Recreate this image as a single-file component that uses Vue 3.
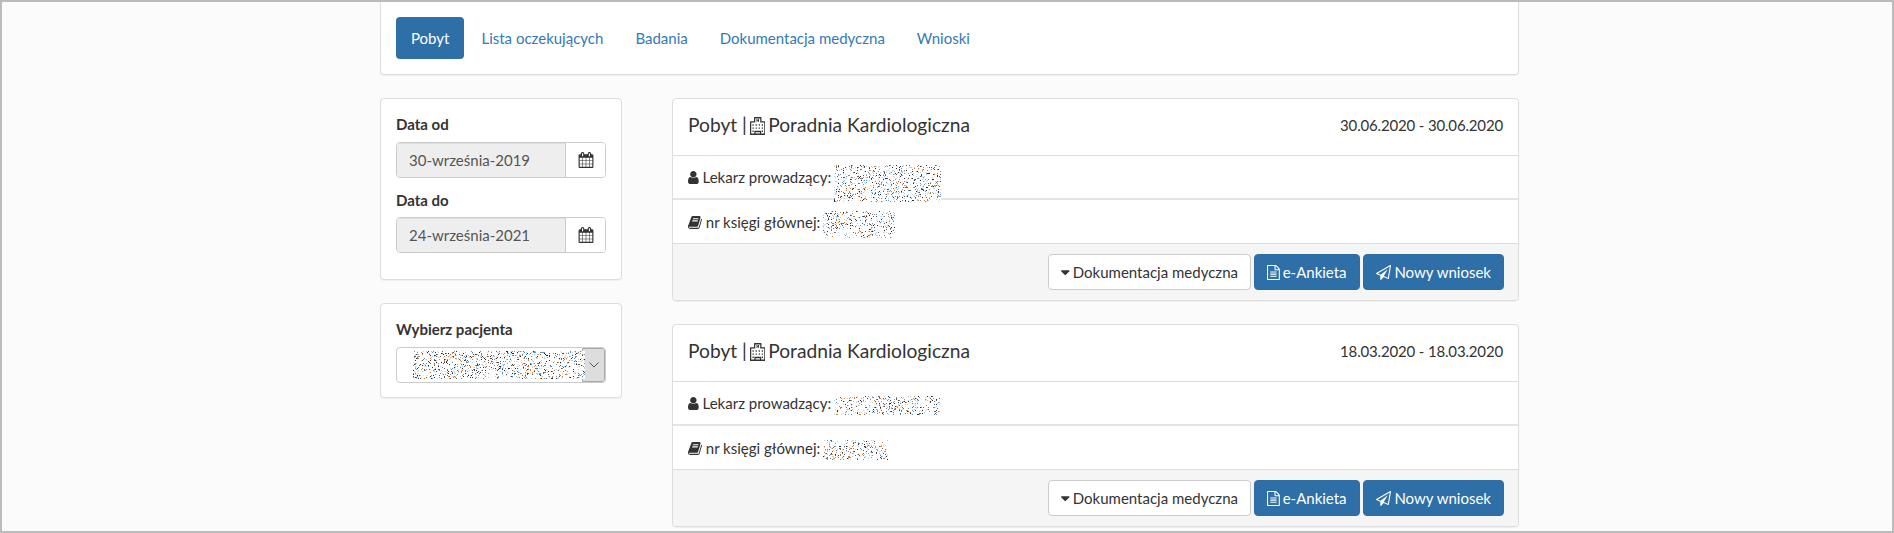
<template>
  <div class="frame">
    <div class="page">
      <nav class="panel nav-panel">
        <a
          v-for="(tab, idx) in tabs"
          :key="tab"
          class="pill"
          :class="{ active: idx === 0 }"
          href="#"
        >{{ tab }}</a>
      </nav>

      <div class="columns">
        <aside class="side">
          <div class="panel side-panel">
            <template v-for="range in ranges" :key="range.label">
              <label class="field-label">{{ range.label }}</label>
              <div class="input-group">
                <span class="input">{{ range.value }}</span>
                <span class="addon">
                  <svg class="icon calendar" viewBox="0 0 1792 1792"><path :d="icons.calendar" /></svg>
                </span>
              </div>
            </template>
          </div>

          <div class="panel patient-panel">
            <label class="field-label">Wybierz pacjenta</label>
            <div class="select">
              <svg
                class="noise select-noise"
                :width="172"
                :height="28"
                shape-rendering="crispEdges"
              >
                <path v-for="d in noise(172, 28, 7)" :key="d.color" :d="d.path" :fill="d.color" />
              </svg>
              <span class="select-arrow">
                <svg width="10" height="6" viewBox="0 0 10 6">
                  <path d="M0.5 0.5 L5 5 L9.5 0.5" fill="none" stroke="#555" stroke-width="1" />
                </svg>
              </span>
            </div>
          </div>
        </aside>

        <main class="visits">
          <section v-for="visit in visits" :key="visit.dates" class="panel visit">
            <header class="visit-head">
              <h3 class="visit-title">
                Pobyt |
                <svg class="icon hospital" viewBox="96 64 1600 1664" preserveAspectRatio="none">
                  <path :d="icons.hospital" fill-rule="evenodd" />
                </svg>
                Poradnia Kardiologiczna
              </h3>
              <span class="dates">{{ visit.dates }}</span>
            </header>
            <div class="visit-row">
              <svg class="icon" viewBox="256 0 1280 1792"><path :d="icons.user" /></svg>
              Lekarz prowadzący:
              <svg
                class="noise"
                :width="visit.doctor.w"
                :height="visit.doctor.h"
                :style="{ top: visit.doctor.dy + 'px' }"
                shape-rendering="crispEdges"
              >
                <path
                  v-for="d in noise(visit.doctor.w, visit.doctor.h, visit.doctor.seed)"
                  :key="d.color"
                  :d="d.path"
                  :fill="d.color"
                />
              </svg>
            </div>
            <div class="visit-row second">
              <svg class="icon" viewBox="0 0 1664 1792"><path :d="icons.book" /></svg>
              nr księgi głównej:
              <svg
                class="noise"
                :width="visit.book.w"
                :height="visit.book.h"
                :style="{ top: visit.book.dy + 'px' }"
                shape-rendering="crispEdges"
              >
                <path
                  v-for="d in noise(visit.book.w, visit.book.h, visit.book.seed)"
                  :key="d.color"
                  :d="d.path"
                  :fill="d.color"
                />
              </svg>
            </div>
            <footer class="visit-foot">
              <button class="btn">
                <svg class="icon tight" viewBox="384 0 1024 1792"><path :d="icons.caret" /></svg>
                Dokumentacja medyczna
              </button>
              <button class="btn primary">
                <svg class="icon tight" viewBox="128 0 1536 1792"><path :d="icons.file" /></svg>
                e-Ankieta
              </button>
              <button class="btn primary">
                <svg class="icon" viewBox="0 0 1792 1792"><path :d="icons.plane" /></svg>
                Nowy wniosek
              </button>
            </footer>
          </section>
        </main>
      </div>
    </div>
  </div>
</template>

<script setup>
const tabs = ["Pobyt", "Lista oczekujących", "Badania", "Dokumentacja medyczna", "Wnioski"];

const ranges = [
  { label: "Data od", value: "30-września-2019" },
  { label: "Data do", value: "24-września-2021" },
];

const visits = [
  {
    dates: "30.06.2020 - 30.06.2020",
    doctor: { w: 107, h: 37, dy: 4, seed: 11 },
    book: { w: 72, h: 27, dy: 0, seed: 23 },
  },
  {
    dates: "18.03.2020 - 18.03.2020",
    doctor: { w: 106, h: 19, dy: 0, seed: 37 },
    book: { w: 65, h: 20, dy: 0, seed: 41 },
  },
];

const icons = {
  calendar:
    "M192 1664h288v-288h-288v288zm352 0h320v-288h-320v288zm-352-352h288v-320h-288v320zm352 0h320v-320h-320v320zm-352-384h288v-288h-288v288zm736 736h320v-288h-320v288zm-384-736h320v-288h-320v288zm768 736h288v-288h-288v288zm-384-352h320v-320h-320v320zm-352-864v-288q0-13-9.5-22.5t-22.5-9.5h-64q-13 0-22.5 9.5t-9.5 22.5v288q0 13 9.5 22.5t22.5 9.5h64q13 0 22.5-9.5t9.5-22.5zm736 864h288v-320h-288v320zm-384-384h320v-288h-320v288zm384 0h288v-288h-288v288zm32-480v-288q0-13-9.5-22.5t-22.5-9.5h-64q-13 0-22.5 9.5t-9.5 22.5v288q0 13 9.5 22.5t22.5 9.5h64q13 0 22.5-9.5t9.5-22.5zm384-64v1280q0 52-38 90t-90 38h-1408q-52 0-90-38t-38-90v-1280q0-52 38-90t90-38h128v-96q0-66 47-113t113-47h64q66 0 113 47t47 113v96h384v-96q0-66 47-113t113-47h64q66 0 113 47t47 113v96h128q52 0 90 38t38 90z",
  user:
    "M1536 1399q0 109-62.5 187t-150.5 78h-854q-88 0-150.5-78t-62.5-187q0-85 8.5-160.5t31.5-152 58.5-131 94-89 134.5-34.5q131 128 313 128t313-128q76 0 134.5 34.5t94 89 58.5 131 31.5 152 8.5 160.5zm-256-887q0 159-112.5 271.5t-271.5 112.5-271.5-112.5-112.5-271.5 112.5-271.5 271.5-112.5 271.5 112.5 112.5 271.5z",
  book:
    "M1639 478q40 57 18 129l-275 906q-19 64-76.5 107.5t-122.5 43.5h-923q-77 0-148.5-53.5t-99.5-131.5q-24-67-2-127 0-4 3-27t4-37q1-8-3-21.5t-3-19.5q2-11 8-21t16.5-23.5 16.5-23.5q23-38 45-91.5t30-91.5q3-10 .5-30t-.5-28q3-11 17-28t17-23q21-36 42-92t25-90q1-9-2.5-32t.5-28q4-13 22-30.5t22-22.5q19-26 42.5-84.5t27.5-96.5q1-8-3-25.5t-2-26.5q2-8 9-18t18-23 17-21q8-12 16.5-30.5t15-35 16-36 19.5-32 26.5-23.5 36-11.5 47.5 5.5l-1 3q38-9 51-9h761q74 0 114 56t18 130l-274 906q-36 119-71.5 153.5t-128.5 34.5h-869q-27 0-38 15-11 16-1 43 24 70 144 70h923q29 0 56-15.5t35-41.5l300-987q7-22 5-57 38 15 59 43zm-1064 2q-4 13 2 22.5t20 9.5h608q13 0 25.5-9.5t16.5-22.5l21-64q4-13-2-22.5t-20-9.5h-608q-13 0-25.5 9.5t-16.5 22.5zm-83 256q-4 13 2 22.5t20 9.5h608q13 0 25.5-9.5t16.5-22.5l21-64q4-13-2-22.5t-20-9.5h-608q-13 0-25.5 9.5t-16.5 22.5z",
  caret:
    "M1408 704q0 26-19 45l-448 448q-19 19-45 19t-45-19l-448-448q-19-19-19-45t19-45 45-19h896q26 0 45 19t19 45z",
  file:
    "M1596 380q28 28 48 76t20 88v1152q0 40-28 68t-68 28h-1344q-40 0-68-28t-28-68v-1600q0-40 28-68t68-28h896q40 0 88 20t76 48zm-444-244v376h376q-10-29-22-41l-313-313q-12-12-41-22zm384 1528v-1024h-416q-40 0-68-28t-28-68v-416h-768v1536h1280zm-1024-864q0-14 9-23t23-9h704q14 0 23 9t9 23v64q0 14-9 23t-23 9h-704q-14 0-23-9t-9-23v-64zm736 224q14 0 23 9t9 23v64q0 14-9 23t-23 9h-704q-14 0-23-9t-9-23v-64q0-14 9-23t23-9h704zm0 256q14 0 23 9t9 23v64q0 14-9 23t-23 9h-704q-14 0-23-9t-9-23v-64q0-14 9-23t23-9h704z",
  plane:
    "M1764 11q33 24 27 64l-256 1536q-5 29-32 45-14 8-31 8-11 0-24-5l-527-215-298 327q-18 21-47 21-14 0-23-4-19-7-30-23.5t-11-36.5v-452l-472-193q-37-14-40-55-3-39 32-59l1664-960q35-21 68 2zm-342 1499l221-1323-1434 827 336 137 863-639-478 797z",
  hospital:
    "M160 448h352V128q0-64 64-64h640q64 0 64 64v320h352q64 0 64 64v1216H96V512q0-64 64-64z M224 576v1024h320v-224q0-32 32-32h640q32 0 32 32v224h320V576h-416V192H640v384z M672 1472h448v128H672z M768 256h96v96h64v-96h96v256h-96v-96h-64v96h-96z M352 736h128v128H352z M352 1024h128v128H352z M352 1312h128v128H352z M672 736h128v128H672z M992 736h128v128H992z M672 1024h128v128H672z M992 1024h128v128H992z M1312 736h128v128h-128z M1312 1024h128v128h-128z M1312 1312h128v128h-128z",
};

const colors = ["#2b2b3a", "#c9853f", "#5f8fc0", "#c3ccd4", "#a5d3ee", "#6b5a52", "#dfe3e6"];

// redacted patient data: one path per colour, 1px dots
const noise = (w, h, seed) => {
  let s = seed * 9301 + 49297;
  const rand = () => {
    s = (s * 9301 + 49297) % 233280;
    return s / 233280;
  };
  const paths = colors.map(() => "");
  for (let y = 0; y < h; y++) {
    for (let x = 0; x < w; x++) {
      if (rand() < 0.2) {
        const c = Math.floor(rand() * colors.length);
        paths[c] += `M${x} ${y}h1v1h-1z`;
      }
    }
  }
  return colors.map((color, i) => ({ color, path: paths[i] }));
};
</script>

<style scoped>
.frame {
  box-sizing: border-box;
  height: 533px;
  border: 2px solid #bbb;
  background: #fbfbfb;
  overflow: hidden;
  font-family: Lato, "Open Sans", sans-serif;
  font-size: 15px;
  line-height: 21px;
  color: #333;
}
.page {
  width: 1139px;
  margin-left: 378px;
}
.panel {
  box-sizing: border-box;
  background: #fff;
  border: 1px solid #ddd;
  border-radius: 4px;
  box-shadow: 0 1px 1px rgba(0, 0, 0, 0.05);
}
.nav-panel {
  display: flex;
  gap: 2px;
  height: 73px;
  padding: 15px;
  border-top: 0;
  border-top-left-radius: 0;
  border-top-right-radius: 0;
}
.pill {
  display: flex;
  align-items: center;
  padding: 0 15px;
  border-radius: 4px;
  color: #337ab7;
  text-decoration: none;
}
.pill.active {
  background: #2f6fa7;
  color: #fff;
}
.columns {
  display: grid;
  grid-template-columns: 242px 1fr;
  column-gap: 50px;
  margin-top: 23px;
}
.side {
  display: flex;
  flex-direction: column;
  gap: 23px;
}
.side-panel {
  height: 182px;
  padding: 15px;
}
.patient-panel {
  height: 95px;
  padding: 15px;
}
.field-label {
  display: block;
  font-weight: 700;
  margin-bottom: 7px;
}
.input-group {
  display: flex;
  height: 36px;
  margin-bottom: 11px;
  border: 1px solid #ccc;
  border-radius: 4px;
  box-sizing: border-box;
  overflow: hidden;
}
.input-group + .field-label {
  margin-top: 12px;
  margin-bottom: 6px;
}
.input {
  flex: 1;
  display: flex;
  align-items: center;
  padding-left: 12px;
  background: #eee;
  color: #555;
  box-shadow: inset 0 1px 1px rgba(0, 0, 0, 0.075);
}
.addon {
  width: 39px;
  display: flex;
  align-items: center;
  justify-content: center;
  border-left: 1px solid #ccc;
  background: #fff;
}
.icon {
  height: 15px;
  fill: currentColor;
  vertical-align: -2px;
}
.icon.tight {
  margin-right: -1px;
}
.calendar {
  height: 16px;
  width: 16px;
}
.select {
  position: relative;
  display: flex;
  justify-content: flex-end;
  box-sizing: border-box;
  height: 36px;
  border: 1px solid #ccc;
  border-radius: 4px;
  overflow: hidden;
}
.select-arrow {
  width: 21px;
  display: flex;
  align-items: center;
  justify-content: center;
  background: #ddd;
  border: 1px solid #a8a8a8;
  border-radius: 0 3px 3px 0;
}
.noise {
  position: relative;
  background: #fff;
  vertical-align: middle;
  margin: -20px 0 -20px -1px;
}
.select-noise {
  position: absolute;
  left: 16px;
  top: 3px;
  margin: 0;
}
.visits {
  display: flex;
  flex-direction: column;
  gap: 23px;
}
.visit {
  height: 203px;
  display: flex;
  flex-direction: column;
}
.visit-head {
  display: flex;
  justify-content: space-between;
  align-items: center;
  height: 57px;
  padding: 0 15px 4px;
  box-sizing: border-box;
  border-bottom: 1px solid #ddd;
}
.visit-title {
  margin: 0 0 2px;
  font-size: 19.2px;
  font-weight: 400;
}
.dates {
  letter-spacing: -0.16px;
}
.hospital {
  width: 15.5px;
  height: 18px;
  margin: 0 -2px;
  vertical-align: -3px;
}
.visit-row {
  height: 44px;
  box-sizing: border-box;
  padding: 11px 15px 0;
  border-bottom: 2px solid #e4e4e4;
}
.visit-row.second {
  height: 44px;
  padding-top: 12px;
  border-bottom: 1px solid #ddd;
}
.visit-foot {
  flex: 1;
  display: flex;
  justify-content: flex-end;
  align-items: center;
  gap: 3px;
  padding: 0 14px;
  background: #f5f5f5;
  border-radius: 0 0 3px 3px;
}
.btn {
  height: 36px;
  padding: 0 12px;
  font: inherit;
  color: #333;
  background: #fff;
  border: 1px solid #ccc;
  border-radius: 4px;
}
.btn.primary {
  color: #fff;
  background: #2f6fa7;
  border-color: #2e6da4;
}
</style>

<style>
body {
  margin: 0;
}
</style>
